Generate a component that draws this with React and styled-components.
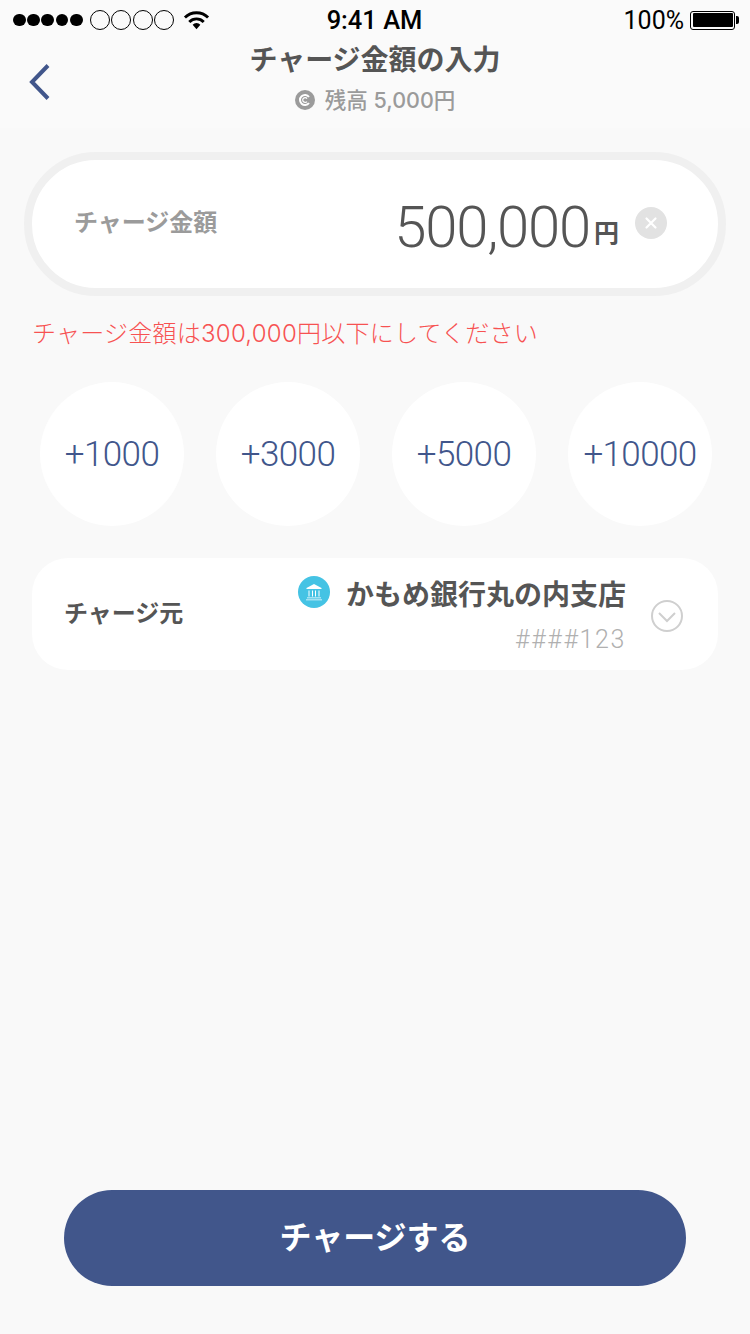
import React from "react";
import styled, { createGlobalStyle } from "styled-components";

const Global = createGlobalStyle`
  html, body { margin: 0; padding: 0; background: #f9f9f9; }
  * { box-sizing: border-box; }
`;
const jp = `"Noto Sans CJK JP", sans-serif`;
const latin = `Roboto, "Noto Sans CJK JP", sans-serif`;
const inter = `Inter, "Noto Sans CJK JP", sans-serif`;

const Page = styled.div`
  width: 750px; height: 1334px; background: #f9f9f9; display: flex; flex-direction: column;
  font-family: ${jp}; overflow: hidden;
`;
const StatusBar = styled.div`
  height: 40px; padding: 0 12px 0 13px; display: grid; grid-template-columns: 1fr auto 1fr; align-items: center;
  color: #000; font-family: Roboto, sans-serif; background: #fafafa;
`;
const Signal = styled.div`display: flex; align-items: center; gap: 1.4px;`;
const FilledDot = styled.span`
  flex: none; width: 12.8px; height: 12.8px; border-radius: 50%; background: #000;
`;
const EmptyDot = styled.span`
  flex: none; width: 20px; height: 20px; border-radius: 50%; border: 1.5px solid #000;
  &:nth-child(6) { margin-left: 6px; }
`;
const Wifi = styled.svg`margin-left: 7px; flex: none;`;
const Clock = styled.div`font-size: 25.5px; font-weight: 500; margin-right: 2px;`;
const Battery = styled.div`display: flex; justify-content: flex-end; align-items: center; gap: 6px; font-size: 25px; padding-right: 3px;`;
const BatteryBody = styled.span`
  width: 45px; height: 19px; border: 1.5px solid #000; border-radius: 3px; padding: 1.5px; display: block; position: relative;
  &::before { content: ""; display: block; height: 100%; background: #000; border-radius: 1px; }
  &::after { content: ""; position: absolute; right: -5px; top: 4px; width: 3px; height: 8px; background: #000; border-radius: 0 2px 2px 0; }
`;
const Header = styled.header`
  height: 88px; position: relative; display: flex; flex-direction: column; align-items: center; background: #fafafa;
`;
const Back = styled.svg`position: absolute; left: 28px; top: 23px;`;
const Title = styled.h1`
  margin: -1px 0 0; font-size: 28px; line-height: 38px; font-weight: 700; color: #555;
`;
const Balance = styled.div`
  margin-top: 8px; display: flex; align-items: center; gap: 10px; font-family: ${inter}; font-size: 21.5px; line-height: 30px; font-weight: 500; color: #9b9b9b;
`;
const Coin = styled.span`
  width: 20px; height: 20px; border-radius: 50%; background: #9b9b9b; color: #fff; display: grid; place-items: center;
`;
const Content = styled.main`flex: 1; display: flex; flex-direction: column; padding: 24px 24px 48px;`;
const AmountCard = styled.section`
  height: 144px; border: 8px solid #f0f0f0; border-radius: 72px; background: #fff;
  display: flex; align-items: center; padding: 0 51px 0 42px;
`;
const AmountLabel = styled.span`font-size: 24px; font-weight: 700; color: #9b9b9b; margin-top: -8px;`;
const AmountValue = styled.span`
  margin-left: auto; font-family: ${latin}; font-size: 58px; font-weight: 300; color: #555; letter-spacing: -1.2px; line-height: 58px; display: flex; align-items: flex-end; margin-top: 5px;
`;
const Yen = styled.span`font-family: ${jp}; font-size: 25px; line-height: 25px; font-weight: 700; margin: 0 0 12px 4px; letter-spacing: 0;`;
const Clear = styled.span`
  width: 32px; height: 32px; border-radius: 50%; background: #e2e2e2; margin-left: 16px; display: grid; place-items: center; margin-top: -2px;
`;
const ErrorText = styled.p`
  margin: 20px 0 0 8px; font-family: ${inter}; font-size: 24px; line-height: 36px; font-weight: 300; color: #f75252; letter-spacing: .25px;
`;
const Chips = styled.div`display: flex; gap: 32px; margin: 30px 0 0 16px;`;
const Chip = styled.button`
  width: 144px; height: 144px; flex: none; border: 0; padding: 0; border-radius: 50%; background: #fff;
  font-family: ${latin}; font-size: 35px; font-weight: 300; color: #41568b; letter-spacing: -.6px;
`;
const SourceCard = styled.section`
  margin: 32px 8px 0; height: 112px; border-radius: 36px; background: #fff;
  display: flex; align-items: center; padding: 0 35px 0 32px;
`;
const SourceLabel = styled.span`font-size: 24px; font-weight: 700; color: #555; margin-top: -6px;`;
const SourceInfo = styled.div`margin-left: auto; display: flex; flex-direction: column; align-items: flex-end; margin-top: 4px;`;
const BankRow = styled.div`display: flex; align-items: center; gap: 16px; margin-top: -5px;`;
const BankIcon = styled.span`
  width: 32px; height: 32px; border-radius: 50%; background: #45c3e4; display: grid; place-items: center; margin-top: -3px;
`;
const BankName = styled.span`font-size: 28px; line-height: 38px; font-weight: 700; color: #555;`;
const Account = styled.span`font-family: ${latin}; font-size: 25px; line-height: 30px; font-weight: 300; letter-spacing: 1.6px; color: #b0b0b0; margin: 13px 0 -2px;`;
const Chevron = styled.svg`margin-left: 25px; margin-top: 4px; flex: none;`;
const Charge = styled.button`
  margin: auto 40px 0; height: 96px; flex: none; border: 0; border-radius: 48px; background: #41568b; color: #fff;
  font-family: ${jp}; font-size: 32px; font-weight: 700; padding: 0 0 7px;
`;

export default function App() {
  return (
    <Page>
      <Global />
      <StatusBar>
        <Signal>
          {[0,1,2,3,4].map(i => <FilledDot key={i} />)}
          {[5,6,7,8].map(i => <EmptyDot key={i} />)}
          <Wifi width="27" height="20" viewBox="0 0 28 20" fill="none" stroke="#000" strokeWidth="3">
            <path d="M2 7.5a17 17 0 0 1 24 0" />
            <path d="M6.5 12a10.5 10.5 0 0 1 15 0" />
            <path d="M14 19.5l-4-4.6a5.5 5.5 0 0 1 8 0z" fill="#000" stroke="none" />
          </Wifi>
        </Signal>
        <Clock>9:41 AM</Clock>
        <Battery>100%<BatteryBody /></Battery>
      </StatusBar>
      <Header>
        <Back width="24" height="38" viewBox="0 0 24 38" fill="none" stroke="#41568b" strokeWidth="4">
          <path d="M20 2.5 4 19l16 16.5" />
        </Back>
        <Title>チャージ金額の入力</Title>
        <Balance>
          <Coin>
            <svg width="14" height="14" viewBox="0 0 14 14" fill="none" stroke="#fff" strokeWidth="2">
              <path d="M11 4a5 5 0 1 0 0 6" />
              <path d="M9 5.5a2.4 2.4 0 1 0 0 3" strokeWidth="1.2" />
            </svg>
          </Coin>
          残高 5,000円
        </Balance>
      </Header>
      <Content>
        <AmountCard>
          <AmountLabel>チャージ金額</AmountLabel>
          <AmountValue>500,000<Yen>円</Yen></AmountValue>
          <Clear>
            <svg width="14" height="14" viewBox="0 0 14 14" stroke="#fff" strokeWidth="2.2" strokeLinecap="round">
              <path d="M2.5 2.5l9 9M11.5 2.5l-9 9" />
            </svg>
          </Clear>
        </AmountCard>
        <ErrorText>チャージ金額は300,000円以下にしてください</ErrorText>
        <Chips>
          {["+1000", "+3000", "+5000", "+10000"].map(t => <Chip key={t}>{t}</Chip>)}
        </Chips>
        <SourceCard>
          <SourceLabel>チャージ元</SourceLabel>
          <SourceInfo>
            <BankRow>
              <BankIcon>
                <svg width="20" height="20" viewBox="0 0 20 20" fill="#fff">
                  <path d="M10 2 17.5 6v1h-15V6z" />
                  <path d="M4.5 8.5h1v6h-1zM8 8.5h1v6H8zM11 8.5h1v6h-1zM14.5 8.5h1v6h-1zM3 15.5h14v.8H3zM2 17.4h16v.8H2z" />
                </svg>
              </BankIcon>
              <BankName>かもめ銀行丸の内支店</BankName>
            </BankRow>
            <Account>####123</Account>
          </SourceInfo>
          <Chevron width="32" height="32" viewBox="0 0 32 32" fill="none" stroke="#cfcfcf" strokeWidth="2">
            <circle cx="16" cy="16" r="15" />
            <path d="M8 13l8 8 8-8" />
          </Chevron>
        </SourceCard>
        <Charge>チャージする</Charge>
      </Content>
    </Page>
  );
}
